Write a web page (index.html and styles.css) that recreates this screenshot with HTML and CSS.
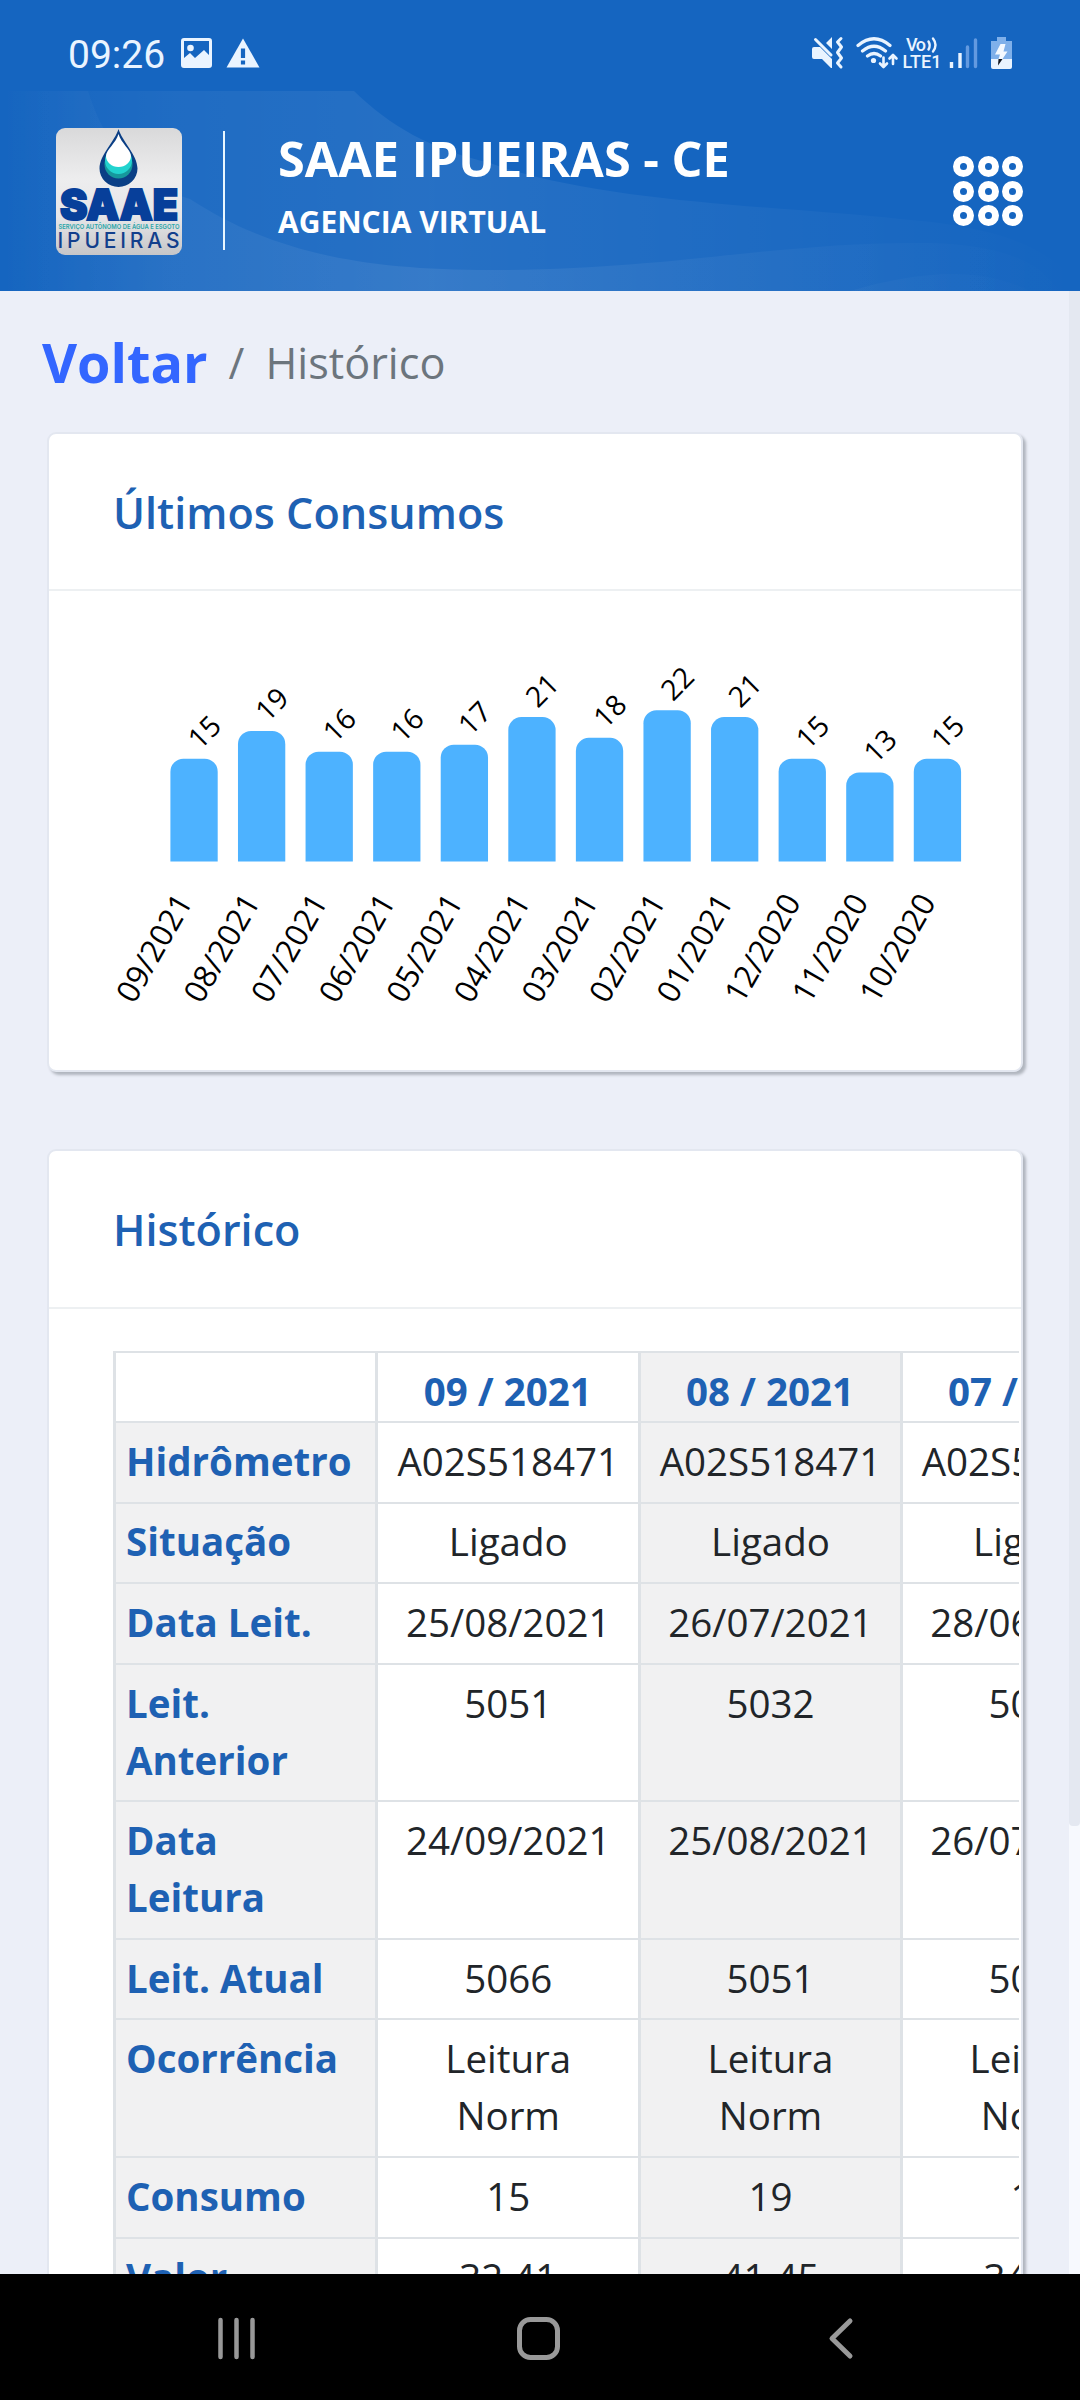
FILE: index.html
```html
<!DOCTYPE html>
<html lang="pt-BR">
<head>
  <meta charset="UTF-8" />
  <meta name="viewport" content="width=device-width, initial-scale=1.0">
  <title>SAAE Ipueiras - Histórico</title>
  <link rel="stylesheet" href="styles.css">
</head>
<body>
  <header class="top">
    <div class="statusbar">
      <span class="clock">09:26</span>
      <svg class="ic-image" width="31" height="30" viewBox="0 0 31 30">
        <path fill="#eaf4ff" fill-rule="evenodd" d="M3 0h25a3 3 0 0 1 3 3v24a3 3 0 0 1-3 3H3a3 3 0 0 1-3-3V3a3 3 0 0 1 3-3zM3 3v17l6-5 5 5 9-8 5 5V3z" />
        <circle cx="9.500" cy="10" r="3.300" fill="#eaf4ff" />
      </svg>
      <svg class="ic-alert" width="34" height="30" viewBox="0 0 34 30">
        <path fill="#eaf4ff" d="M17 0.500L33.500 29.500H0.500z" />
        <path stroke="#1565c0" stroke-width="4.200" d="M17 10.500v9.500M17 22.500v4" />
      </svg>
      <span class="spacer"></span>
      <svg class="ic-right" width="210" height="36" viewBox="808 35 210 36" fill="none" stroke="#eaf4ff" stroke-linecap="round">
        <!-- mute / vibrate -->
        <path fill="#eaf4ff" stroke="none" d="M814 47h6l12 12v9h-1l-9-9h-8q-2 0-2-2v-8q0-2 2-2zM826 43l6-6v12z" />
        <path stroke-width="3" d="M815.500 39.500L831 55" />
        <path stroke-width="3" stroke-linejoin="round" d="M841 38.500l-3.500 3.500 4 5-4 5.500 4 5.500-4 5 3.500 4" />
        <!-- wifi -->
        <path stroke-width="3.200" d="M858 45.500q16-13.500 32 0M862.500 51q11.500-9.500 23 0M867.500 56q6.500-5 13 0" />
        <circle cx="873.500" cy="60.500" r="2.600" fill="#eaf4ff" stroke="none" />
        <path stroke-width="2.600" stroke-linejoin="round" d="M883.500 57.500v8.500M880 63.500l3.500 3.500 3.500-3.500M893 64V55.500M889.500 58.500L893 55l3.500 3.500" />
        <!-- VoLTE -->
        <g class="volte">
          <text x="906" y="51" textLength="20">Vo</text>
          <text x="902.500" y="68" textLength="39" lengthAdjust="spacingAndGlyphs">LTE1</text>
        </g>
        <path stroke-width="2.400" d="M928.500 41.500q2.500 4 0 8M933 38.500q5 6.500 0 13" />
        <!-- signal -->
        <path stroke-width="3.400" stroke-linecap="butt" d="M951.500 68v-6M960 68V53" />
        <path stroke-width="3.400" stroke="#639ae0" d="M967.500 66.500V47M975.500 66.500V40" />
        <!-- battery -->
        <path fill="#7fb0ea" stroke="none" d="M997 37h9v4h6v18h-21V41h6z" />
        <path fill="#eaf4ff" stroke="none" d="M991 59h21v8q0 2-2 2h-17q-2 0-2-2z" />
        <path fill="#f4f9ff" stroke="none" d="M1000.500 44h5l-2 7.500h4L1002.500 59h-4l1.500-4.500h-5z" />
        <path fill="#10151f" stroke="none" d="M998.500 59h4l-4.500 6.500z" />
      </svg>
    </div>
    <div class="brandbar">
      <svg class="waves" width="1080" height="200" viewBox="0 0 1080 200">
        <defs>
          <linearGradient id="wave" gradientUnits="userSpaceOnUse" x1="0" x2="1080" y1="0" y2="0">
            <stop offset="0" stop-color="#fff" stop-opacity="0" />
            <stop offset="0.160" stop-color="#fff" stop-opacity="0.045" />
            <stop offset="0.400" stop-color="#fff" stop-opacity="0.075" />
            <stop offset="1" stop-color="#fff" stop-opacity="0" />
          </linearGradient>
        </defs>
        <path fill="url(#wave)" d="M0 0H354C390 35 430 58 490 72C600 112 780 115 900 128C980 134 1050 150 1080 198V200H0z" />
        <path fill="url(#wave)" d="M0 0H88C110 70 150 95 190 108C270 160 360 180 500 179C680 178 780 150 930 152C1000 154 1040 170 1060 200H0z" />
        <path fill="url(#wave)" d="M850 200C920 180 980 175 1030 200z" />
      </svg>
      <svg class="logo" width="126" height="127" viewBox="0 0 126 127">
        <defs>
          <linearGradient id="plate" x1="0" x2="0" y1="0" y2="1">
            <stop offset="0" stop-color="#d9d9da" />
            <stop offset="0.400" stop-color="#ededee" />
            <stop offset="0.700" stop-color="#e6e6e8" />
            <stop offset="1" stop-color="#c6c6c8" />
          </linearGradient>
        </defs>
        <rect width="126" height="127" rx="9" fill="url(#plate)" />
        <path fill="#0b3f85" d="M62.500 1C66 13 81.500 27 81.500 40.500a19 18.500 0 0 1-38 0C43.500 27 59 13 62.500 1z" />
        <circle cx="62.500" cy="36.500" r="14" fill="#16989c" />
        <circle cx="62.500" cy="32.500" r="13.500" fill="#22d3cf" />
        <path fill="#fff" d="M62.500 6C65 15 75 22 75 28a12.500 11 0 0 1-25 0C50 22 60 15 62.500 6z" />
        <text class="logo-name" x="4" y="91.500" textLength="118" lengthAdjust="spacingAndGlyphs">SAAE</text>
        <text class="logo-tag" x="2.500" y="100.500" textLength="121" lengthAdjust="spacingAndGlyphs">SERVIÇO AUTÔNOMO DE ÁGUA E ESGOTO</text>
        <text class="logo-city" x="1.500" y="120" textLength="122">IPUEIRAS</text>
      </svg>
      <div class="divider"></div>
      <div class="brand">
        <h1>SAAE IPUEIRAS - CE</h1>
        <p>AGENCIA VIRTUAL</p>
      </div>
      <div class="menu">
        <i></i><i></i><i></i>
        <i></i><i></i><i></i>
        <i></i><i></i><i></i>
      </div>
    </div>
  </header>

  <main class="content">
    <nav class="breadcrumb">
      <a class="back">Voltar</a>
      <span class="slash">/</span>
      <span class="current">Histórico</span>
    </nav>

    <section class="card chart-card">
      <h2 class="card-title">Últimos Consumos</h2>
      <svg id="chart" class="chart" width="972" height="479" viewBox="0 0 972 479">
        <clipPath id="plot"><rect width="972" height="270.500" /></clipPath>
      </svg>
    </section>

    <section class="card history-card">
      <h2 class="card-title">Histórico</h2>
      <div class="table-wrap">
        <table class="history">
          <thead>
            <tr><th></th><th>09 / 2021</th><th>08 / 2021</th><th>07 / 2021</th></tr>
          </thead>
          <tbody>
            <tr><th>Hidrômetro</th><td>A02S518471</td><td>A02S518471</td><td>A02S518471</td></tr>
            <tr><th>Situação</th><td>Ligado</td><td>Ligado</td><td>Ligado</td></tr>
            <tr><th>Data Leit.</th><td>25/08/2021</td><td>26/07/2021</td><td>28/06/2021</td></tr>
            <tr><th>Leit.<br>Anterior</th><td>5051</td><td>5032</td><td>5016</td></tr>
            <tr><th>Data<br>Leitura</th><td>24/09/2021</td><td>25/08/2021</td><td>26/07/2021</td></tr>
            <tr><th>Leit. Atual</th><td>5066</td><td>5051</td><td>5032</td></tr>
            <tr><th>Ocorrência</th><td>Leitura<br>Norm</td><td>Leitura<br>Norm</td><td>Leitura<br>Norm</td></tr>
            <tr><th>Consumo</th><td>15</td><td>19</td><td>16</td></tr>
            <tr><th>Valor</th><td>32.41</td><td>41.45</td><td>34.67</td></tr>
          </tbody>
        </table>
      </div>
    </section>
    <div class="scrollbar"><div class="thumb"></div></div>
  </main>

  <footer class="navbar">
    <svg width="1080" height="126" viewBox="0 0 1080 126" fill="none" stroke="#999" stroke-linecap="round" stroke-linejoin="round">
      <path stroke-width="4.500" d="M220.500 46v37M236.500 46v37M252.500 46v37" />
      <rect x="519.500" y="45.500" width="38" height="38" rx="11" stroke-width="5" />
      <path stroke-width="5" d="M850 47L832 64.500 850 82" />
    </svg>
  </footer>

  <script>
    const consumos = [
      ['09/2021', 15], ['08/2021', 19], ['07/2021', 16], ['06/2021', 16],
      ['05/2021', 17], ['04/2021', 21], ['03/2021', 18], ['02/2021', 22],
      ['01/2021', 21], ['12/2020', 15], ['11/2020', 13], ['10/2020', 15]
    ];

    let out = '';
    consumos.forEach(([mes, valor], i) => {
      const x = 121.4 + i * 67.58;
      const top = 271.6 - valor * 6.93;
      const vx = x + 29.5;
      const vy = top - 8;
      const lx = x + 23;
      out += `
        <rect class="bar" x="${x}" y="${top}" width="47.3" height="300" rx="13" clip-path="url(#plot)" />
        <text class="value" x="${vx}" y="${vy}" transform="rotate(-45 ${vx} ${vy})">${valor}</text>
        <text class="month" x="${lx}" y="311" transform="rotate(-60 ${lx} 311)">${mes}</text>`;
    });
    document.getElementById('chart').innerHTML += out;
  </script>
</body>
</html>
```
FILE: styles.css
```css
* {
  box-sizing: border-box;
}

body {
  font-family: "Open Sans", "Noto Sans", sans-serif;
  background-color: #eceff8;
  color: #212529;
  margin: 0;
  width: 1080px;
  height: 2400px;
  overflow: hidden;
  display: flex;
  flex-direction: column;
}

h1, h2, p {
  margin: 0;
}

.top {
  height: 291px;
  flex: none;
  background-color: #1565c0;
  color: #fff;
}

.statusbar {
  height: 91px;
  display: flex;
  align-items: flex-start;
  padding: 35px 62px 0 68px;
}

.clock {
  font-family: Roboto, sans-serif;
  font-size: 39px;
  line-height: 40px;
  width: 113px;
  color: #eaf4ff;
}

.ic-image {
  margin-top: 3px;
}

.ic-alert {
  margin: 3px 0 0 14px;
}

.spacer {
  flex: 1;
}

.volte text {
  font-family: Roboto, sans-serif;
  font-size: 18px;
  font-weight: 500;
  fill: #eaf4ff;
  stroke: none;
}

.brandbar {
  position: relative;
  height: 200px;
  display: flex;
  align-items: flex-start;
  padding: 0 57px 0 56px;
}

.waves {
  position: absolute;
  top: 0;
  left: 0;
}

.logo, .divider, .brand, .menu {
  position: relative;
}

.logo {
  margin-top: 37px;
}

.logo-name {
  font-family: Inter, sans-serif;
  font-size: 42px;
  font-weight: 900;
  fill: #073f9a;
  stroke: #073f9a;
  stroke-width: 2px;
}

.logo-tag {
  font-family: Inter, sans-serif;
  font-size: 6.5px;
  font-weight: 600;
  fill: #2aa5a8;
}

.logo-city {
  font-family: Inter, sans-serif;
  font-size: 21px;
  font-weight: 500;
  fill: #123f8c;
}

.divider {
  width: 2px;
  height: 119px;
  margin: 40px 0 0 41px;
  background-color: #e8f6ff;
}

.brand {
  margin: 33px 0 0 53px;
  flex: 1;
  white-space: nowrap;
}

.brand h1 {
  font-size: 48.6px;
  font-weight: 700;
  line-height: 69px;
}

.brand p {
  font-size: 30px;
  font-weight: 700;
  line-height: 58px;
}

.menu {
  margin-top: 65px;
  display: grid;
  grid-template-columns: repeat(3, 21px);
  gap: 3.5px;
}

.menu i {
  height: 21px;
  border: 7px solid #fff;
  border-radius: 50%;
}

.content {
  position: relative;
  height: 1983px;
  flex: none;
  overflow: hidden;
  padding: 0 57px 0 47px;
}

.breadcrumb {
  height: 141px;
  display: flex;
  align-items: center;
  margin-left: -5px;
  padding-top: 1px;
  font-size: 43.2px;
  color: #6c757d;
}

.back {
  font-size: 54px;
  font-weight: 700;
  color: #3366ff;
}

.slash {
  margin: 0 21px 0 21px;
}

.card {
  background-color: #fff;
  border: 2px solid #e3e7f0;
  border-radius: 9px;
  box-shadow: 3px 3px 3px #b0b5be;
}

.card-title {
  height: 157px;
  border-bottom: 2px solid #edf0f2;
  padding-left: 64px;
  font-size: 43.2px;
  font-weight: 600;
  line-height: 157px;
  color: #1e61b3;
}

.chart {
  display: block;
}

.bar {
  fill: #4db2ff;
}

.value {
  font-size: 28.5px;
}

.month {
  font-size: 31.3px;
  text-anchor: end;
}

.history-card {
  margin-top: 77px;
  height: 1300px;
}

.history-card .card-title {
  height: 158px;
}

.table-wrap {
  margin: 42px 2px 0 64px;
  overflow: hidden;
}

.history {
  display: block;
  width: 1060px;
  border-top: 2px solid #dee2e6;
  border-left: 3px solid #dee2e6;
  font-size: 38.5px;
  line-height: 57px;
}

.history thead, .history tbody {
  display: block;
}

.history tr {
  display: grid;
  grid-template-columns: 262px 262.500px 262px 262px;
}

.history th, .history td {
  border-right: 3px solid #dee2e6;
  border-bottom: 2px solid #dee2e6;
  padding: 9.900px 3px 11.700px 4px;
  text-align: center;
}

.history th {
  color: #1e61b3;
  font-weight: 700;
}

.history thead th {
  height: 70px;
  padding: 9.500px 4px 0;
}

.history tbody th {
  text-align: left;
  padding-left: 10px;
}

.history tbody th, .history th:nth-child(3), .history td:nth-child(3) {
  background-color: #f1f1f2;
}

.scrollbar {
  position: absolute;
  top: 0;
  right: 0;
  width: 11px;
  height: 100%;
  background-color: #f7f9fe;
}

.thumb {
  height: 1535px;
  background-color: #e4e8f1;
  border-radius: 0 0 4px 4px;
}

.navbar {
  height: 126px;
  flex: none;
  background-color: #000;
}

.navbar svg {
  display: block;
}
```
